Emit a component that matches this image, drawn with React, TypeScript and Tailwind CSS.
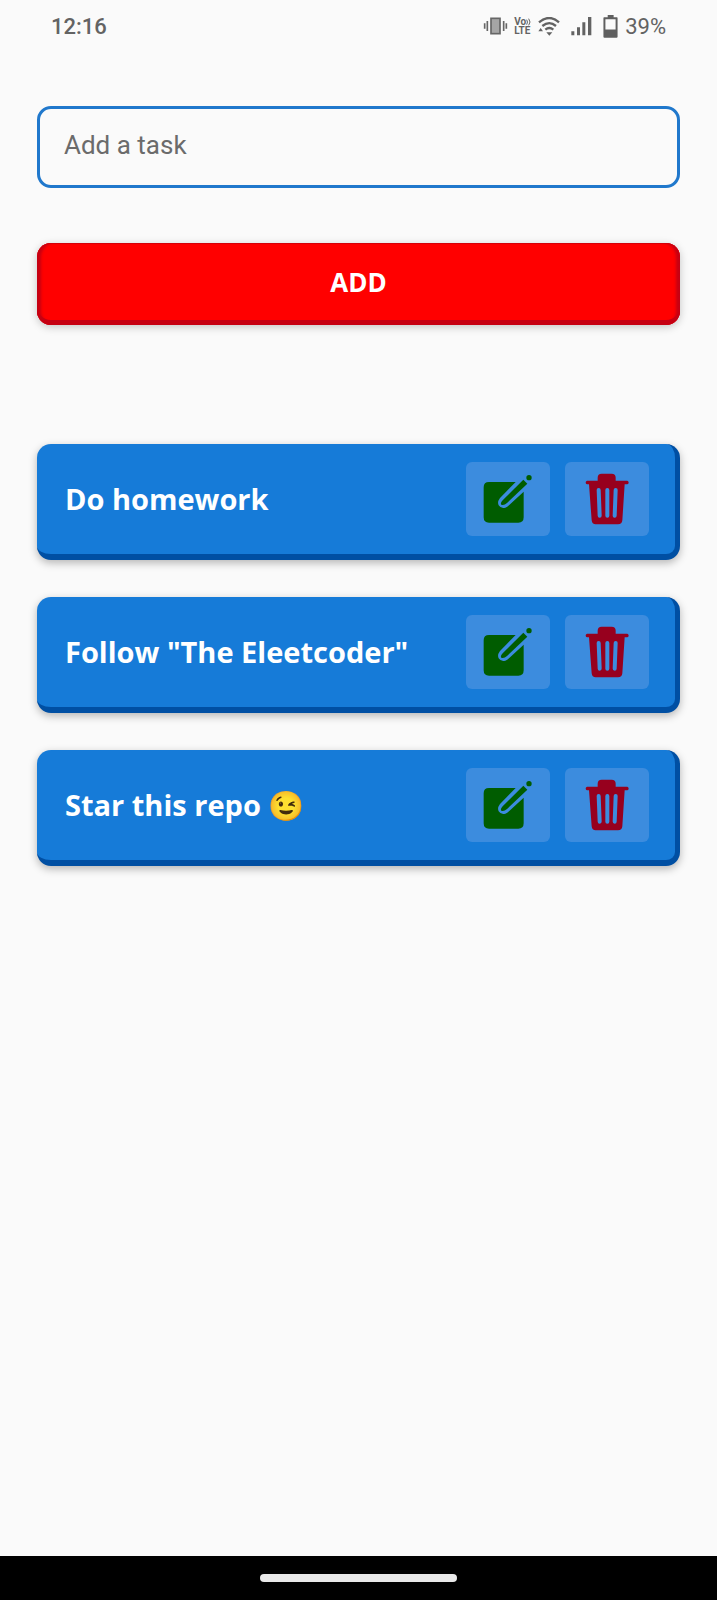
import { useState } from "react";

type Task = { id: number; title: string };

const initialTasks: Task[] = [
  { id: 1, title: "Do homework" },
  { id: 2, title: 'Follow "The Eleetcoder"' },
  { id: 3, title: "Star this repo 😉" },
];

function VibrateIcon() {
  return (
    <svg viewBox="0 0 75 60" className="h-5 w-[25px]" aria-hidden="true">
      <rect x="24" y="7" width="27" height="46" fill="#a6a6a6" stroke="#666" strokeWidth="5" />
      <path d="M13 15v30M5 22v16M62 15v30M70 22v16" stroke="#666" strokeWidth="5" fill="none" />
    </svg>
  );
}

function VolteIcon() {
  return (
    <span className="flex w-[18px] flex-col items-start text-[10px] leading-[9px] font-bold" aria-label="VoLTE">
      <span className="flex items-center">
        Vo
        <svg viewBox="0 0 15 24" className="h-2 w-[5px]" aria-hidden="true">
          <path d="M2 5q5 7 0 15M8 2q8 10 0 20" stroke="#636363" strokeWidth="3" fill="none" />
        </svg>
      </span>
      <span>LTE</span>
    </span>
  );
}

function WifiIcon() {
  return (
    <svg viewBox="0 0 66 57" className="h-[19px] w-[22px]" aria-hidden="true">
      <path d="M3 16Q34-10 63 16M13 27Q34 10 54 27M22 38Q34 28 46 38" stroke="#636363" strokeWidth="7" fill="none" />
      <path d="M25 46h18l-9 10zM1 43l7-10 7 10z" fill="#636363" />
    </svg>
  );
}

function SignalIcon() {
  return (
    <svg viewBox="0 0 63 60" className="h-5 w-[21px]" aria-hidden="true">
      <path d="M1 46h9v12H1zM18 34h9v24h-9zM34 19h9v39h-9zM51 3h10v55H51z" fill="#636363" />
    </svg>
  );
}

function BatteryIcon() {
  return (
    <svg viewBox="0 0 45 70" className="h-[23px] w-[15px]" aria-hidden="true">
      <path d="M14 0h18v7h10q2 0 2 2v57q0 3-3 3H4q-3 0-3-3V9q0-2 2-2h11zM7 13v31h31V13z" fill="#5f5f5f" fillRule="evenodd" />
    </svg>
  );
}

function EditIcon() {
  return (
    <svg viewBox="0 0 150 150" className="size-[50px]" aria-hidden="true">
      <path
        d="M18 24H98L51 72Q42 84 47 94Q54 105 67 101Q73 99 78 94L122 53V130Q122 146 106 146H18Q2 146 2 130V40Q2 24 18 24Z"
        fill="#005c00"
      />
      <path d="M121 17L133 29L72 87Q62 96 55 92Q51 87 59 79Z" fill="#005c00" />
      <circle cx="138" cy="11" r="8" fill="#005c00" />
    </svg>
  );
}

function TrashIcon() {
  return (
    <svg viewBox="0 0 132 156" className="h-[52px] w-11" aria-hidden="true">
      <path
        d="M50 2H80Q92 2 92 14V23H127Q131 24 131 28.500T127 34H119L112 142Q111 154 99 154H32Q21 154 20 142L12 34H6Q2 33 2 28.500T6 23H38V14Q38 2 50 2Z"
        fill="#97001e"
      />
      <path d="M41 51L44 128M67 51V128M92 51L89 128" stroke="#3c8cde" strokeWidth="12" strokeLinecap="round" />
    </svg>
  );
}

export default function App() {
  const [tasks, setTasks] = useState(initialTasks);
  const [draft, setDraft] = useState("");

  const addTask = () => {
    const title = draft.trim();
    if (!title) return;
    setTasks([...tasks, { id: Date.now(), title }]);
    setDraft("");
  };

  const removeTask = (id: number) => setTasks(tasks.filter((task) => task.id !== id));

  const editTask = (task: Task) => {
    setDraft(task.title);
    removeTask(task.id);
  };

  return (
    <div className="flex min-h-screen flex-col bg-[#fafafa] font-['Open_Sans',sans-serif]">
      <header className="flex h-[52px] items-center justify-between pr-[51px] pl-[51px] font-['Roboto',sans-serif] text-[22px] text-[#636363]">
        <time className="font-medium">12:16</time>
        <div className="flex items-center">
          <VibrateIcon />
          <div className="flex items-center gap-[6px] pl-[6px]">
            <VolteIcon />
            <WifiIcon />
          </div>
          <div className="flex items-center gap-[11px] pl-[11px]">
            <SignalIcon />
            <BatteryIcon />
          </div>
          <span className="pl-[7px]">39%</span>
        </div>
      </header>

      <main className="flex flex-1 flex-col px-[37px] pt-[54px]">
        <form
          className="flex flex-col gap-[55px]"
          onSubmit={(event) => {
            event.preventDefault();
            addTask();
          }}
        >
          <input
            type="text"
            aria-label="Add a task"
            placeholder="Add a task"
            value={draft}
            onChange={(event) => setDraft(event.target.value)}
            className="h-[82px] w-full rounded-[14px] border-3 border-[#2078cc] bg-transparent px-6 pb-1 font-['Roboto',sans-serif] text-[26px] text-[#333] outline-none placeholder:text-[#6b6b6b]"
          />
          <button
            type="submit"
            className="h-[82px] w-full rounded-[14px] bg-[#ff0000] pb-1 text-[26px] font-bold text-white shadow-[inset_0_-5px_0_#c60012,inset_5px_0_3px_-1px_#c60012,inset_-5px_0_3px_-1px_#c60012,inset_0_1px_0_#dc0008,0_2px_8px_rgba(0,0,0,0.22)]"
          >
            ADD
          </button>
        </form>

        <ul className="flex flex-col gap-[37px] pt-[119px] pb-9">
          {tasks.map((task) => (
            <li
              key={task.id}
              className="flex min-h-[116px] items-center gap-[15px] rounded-[14px] border-r-[5px] border-b-[6px] border-[#004fa3] bg-[#167bd8] pr-[26px] pl-7 shadow-[0_3px_8px_rgba(0,0,0,0.28)]"
            >
              <span className="min-w-0 flex-1 text-[29px] font-bold text-white">{task.title}</span>
              <button
                type="button"
                aria-label={`Edit ${task.title}`}
                onClick={() => editTask(task)}
                className="flex h-[74px] w-[84px] items-center justify-center rounded-md bg-[#3c8cde]"
              >
                <EditIcon />
              </button>
              <button
                type="button"
                aria-label={`Delete ${task.title}`}
                onClick={() => removeTask(task.id)}
                className="flex h-[74px] w-[84px] items-center justify-center rounded-md bg-[#3c8cde]"
              >
                <TrashIcon />
              </button>
            </li>
          ))}
        </ul>
      </main>

      <footer className="flex h-11 items-center justify-center bg-black">
        <div className="h-2 w-[197px] rounded-full bg-[#e9e9e9]" />
      </footer>
    </div>
  );
}
